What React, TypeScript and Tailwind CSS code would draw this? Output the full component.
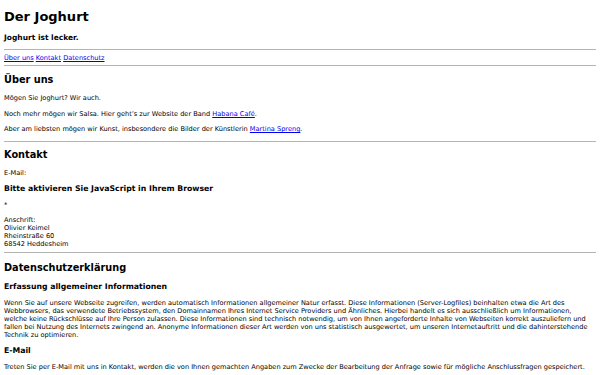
import React from 'react';

const linkCls = 'text-[#0000ee] underline';

const Rule: React.FC = () => <hr className="my-[3.5px] h-px border-0 bg-[#b4b4b4]" />;

const H2: React.FC<{ children: React.ReactNode; top?: string }> = ({ children, top = 'mt-[8px]' }) => (
  <h2 className={`${top} mb-[8px] text-[9.75px] leading-[12px] font-bold`}>{children}</h2>
);

const H3: React.FC<{ children: React.ReactNode }> = ({ children }) => (
  <h3 className="my-[7.5px] text-[7.75px] leading-[9px] font-bold">{children}</h3>
);

const P: React.FC<{ children: React.ReactNode }> = ({ children }) => <p className="my-[7.5px]">{children}</p>;

const App: React.FC = () => {
  return (
    <div className="min-h-[375px] overflow-hidden bg-white px-[4px] pt-[9px] pb-px text-[6.6px] leading-[8px] text-black font-['DejaVu_Sans',sans-serif]">
      <h1 className="mt-0 mb-[9px] text-[13px] leading-[16px] font-bold">Der Joghurt</h1>
      <p className="mt-[9px] mb-[7px] text-[7.5px] leading-[8px] font-bold">Joghurt ist lecker.</p>
      <Rule />
      <div>
        <a href="#ueber" className={linkCls}>Über uns</a>{' '}
        <a href="#kontakt" className={linkCls}>Kontakt</a>{' '}
        <a href="#datenschutz" className={linkCls}>Datenschutz</a>
      </div>
      <Rule />

      <section id="ueber">
        <H2>Über uns</H2>
        <P>Mögen Sie Joghurt? Wir auch.</P>
        <P>
          Noch mehr mögen wir Salsa. Hier geht’s zur Website der Band <a href="#" className={linkCls}>Habana Café</a>.
        </P>
        <P>
          Aber am liebsten mögen wir Kunst, insbesondere die Bilder der Künstlerin{' '}
          <a href="#" className={linkCls}>Martina Spreng</a>.
        </P>
      </section>
      <Rule />

      <section id="kontakt">
        <H2 top="mt-[7px]">Kontakt</H2>
        <P>E-Mail:</P>
        <H3>Bitte aktivieren Sie JavaScript in Ihrem Browser</H3>
        <P>*</P>
        <address className="not-italic">
          Anschrift:
          <br />
          Olivier Keimel
          <br />
          Rheinstraße 60
          <br />
          68542 Heddesheim
        </address>
      </section>
      <Rule />

      <section id="datenschutz">
        <H2 top="mt-[9.5px]">Datenschutzerklärung</H2>
        <H3>Erfassung allgemeiner Informationen</H3>
        <p className="my-[7.5px] whitespace-nowrap">
          Wenn Sie auf unsere Webseite zugreifen, werden automatisch Informationen allgemeiner Natur erfasst. Diese
          Informationen (Server-Logfiles) beinhalten etwa die Art des
          <br />
          Webbrowsers, das verwendete Betriebssystem, den Domainnamen Ihres Internet Service Providers und Ähnliches.
          Hierbei handelt es sich ausschließlich um Informationen,
          <br />
          welche keine Rückschlüsse auf Ihre Person zulassen. Diese Informationen sind technisch notwendig, um von Ihnen
          angeforderte Inhalte von Webseiten korrekt auszuliefern und
          <br />
          fallen bei Nutzung des Internets zwingend an. Anonyme Informationen dieser Art werden von uns statistisch
          ausgewertet, um unseren Internetauftritt und die dahinterstehende
          <br />
          Technik zu optimieren.
        </p>
        <H3>E-Mail</H3>
        <p className="my-[7.5px] whitespace-nowrap">
          Treten Sie per E-Mail mit uns in Kontakt, werden die von Ihnen gemachten Angaben zum Zwecke der Bearbeitung
          der Anfrage sowie für mögliche Anschlussfragen gespeichert.
        </p>
      </section>
    </div>
  );
};

export default App;
